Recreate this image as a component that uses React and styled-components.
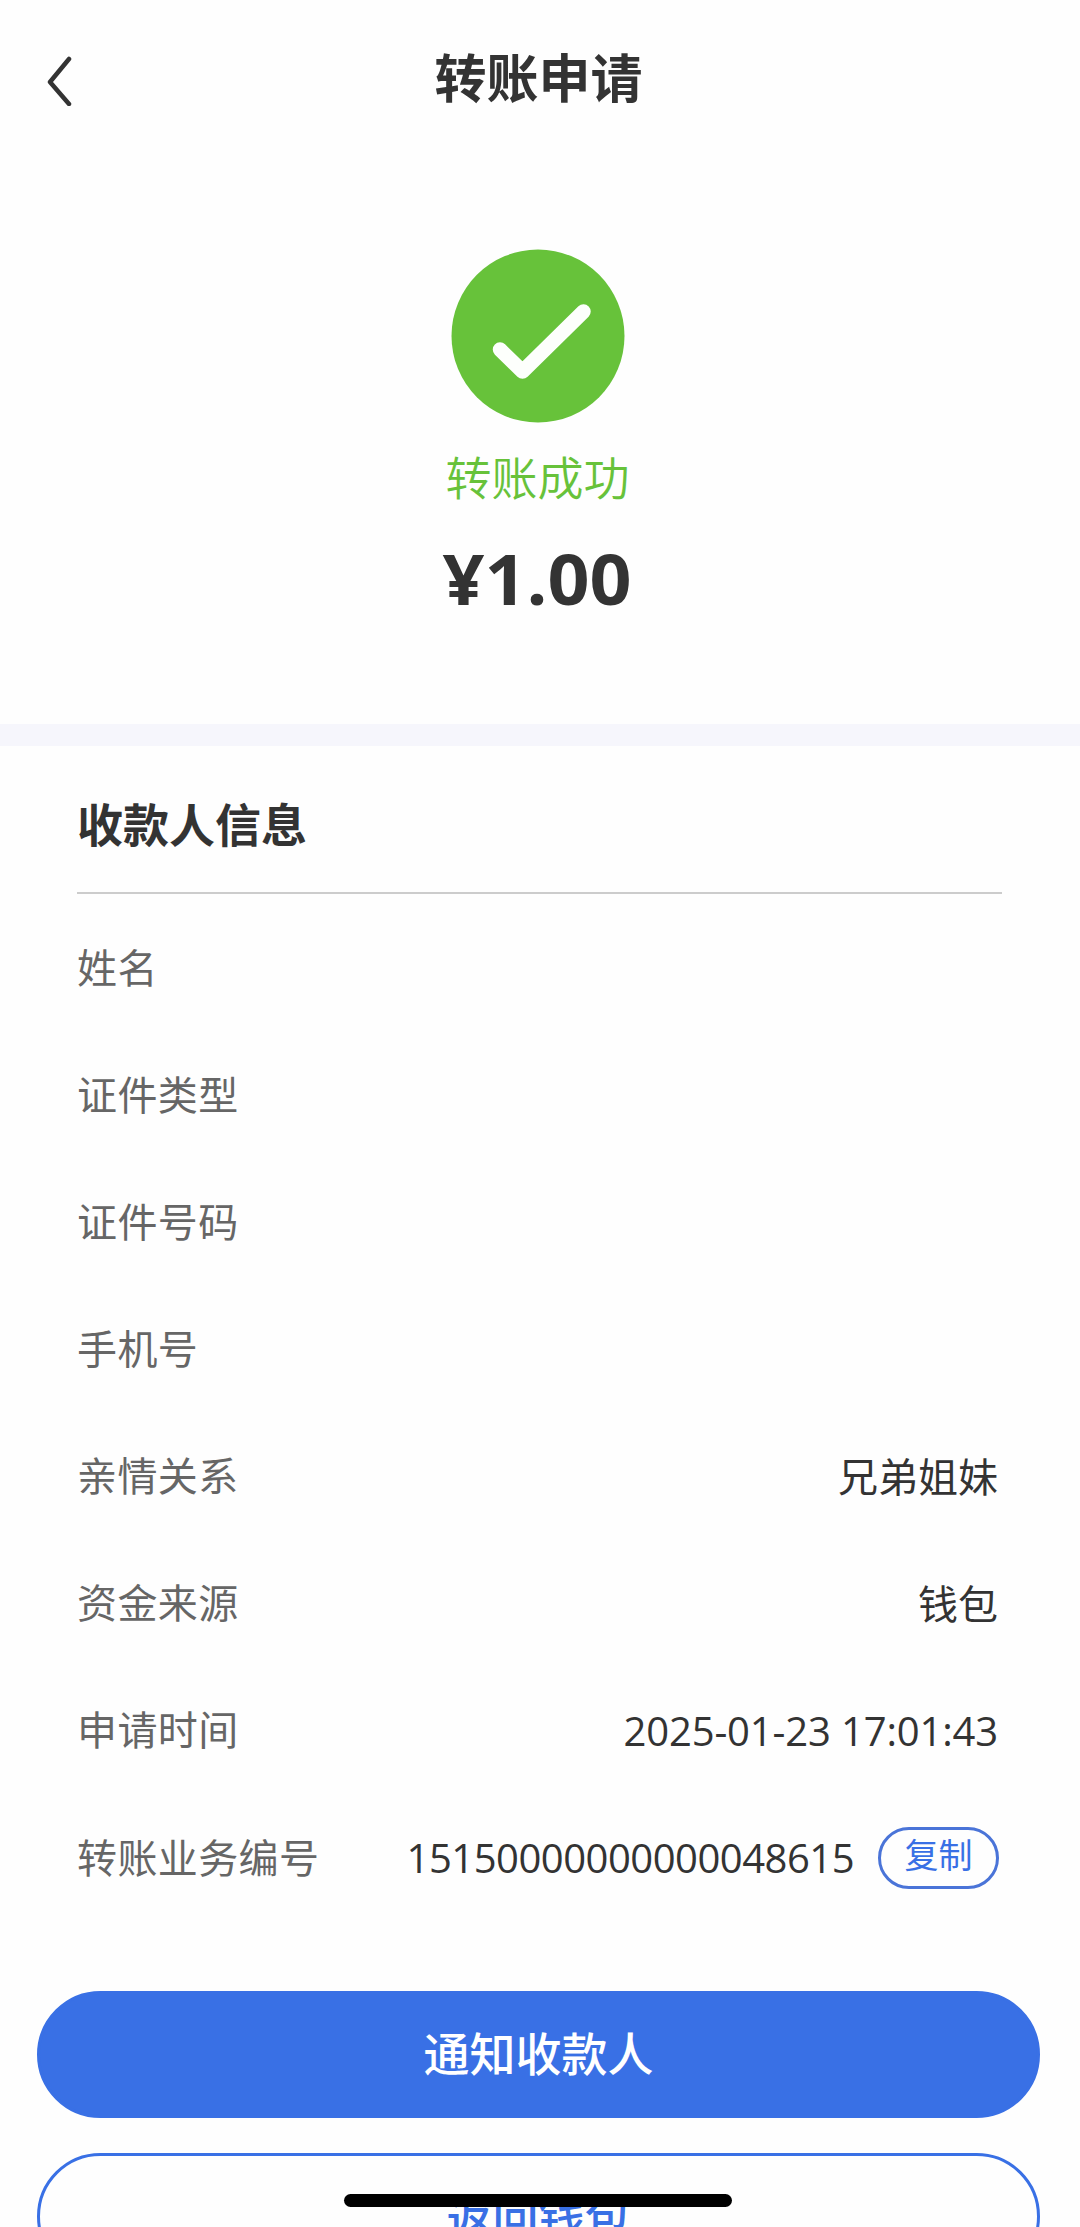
import React from 'react'
import styled, { createGlobalStyle, css } from 'styled-components';

const details = [
  { label: '姓名' },
  { label: '证件类型' },
  { label: '证件号码' },
  { label: '手机号' },
  { label: '亲情关系', value: '兄弟姐妹' },
  { label: '资金来源', value: '钱包' },
  { label: '申请时间', value: '2025-01-23 17:01:43', tracking: '-0.15px' },
  { label: '转账业务编号', value: '15150000000000048615', tracking: '-0.5px', copy: true },
];

const App = () => {
  const copyText = (text) => {
    navigator.clipboard?.writeText(text);
  };

  return (
    <Page>
      <GlobalStyle />
      <Header>
        <BackButton aria-label='返回'>
          <svg width='30' height='52' viewBox='0 0 30 52'>
            <path d='M25 5 L6 28 L25 50' fill='none' stroke='#333' strokeWidth='4.5' strokeLinecap='round' strokeLinejoin='round' />
          </svg>
        </BackButton>
        <Title>转账申请</Title>
      </Header>

      <Result>
        <svg width='174' height='174' viewBox='0 0 174 174'>
          <circle cx='87' cy='87' r='86.5' fill='#67c23a' />
          <path d='M49 100.5 L71.5 122.5 L132.5 62.5' fill='none' stroke='#fdfffc' strokeWidth='14.5' strokeLinecap='round' strokeLinejoin='round' />
        </svg>
        <Status>转账成功</Status>
        <Amount>¥1.00</Amount>
      </Result>

      <Divider />

      <Payee>
        <SectionTitle>收款人信息</SectionTitle>
        {details.map((item) => (
          <Row key={item.label}>
            <Label>{item.label}</Label>
            {item.value && <Value $tracking={item.tracking}>{item.value}</Value>}
            {item.copy && <CopyButton onClick={() => copyText(item.value)}>复制</CopyButton>}
          </Row>
        ))}
      </Payee>

      <Actions>
        <ActionButton $primary>通知收款人</ActionButton>
        <ActionButton>返回钱包</ActionButton>
      </Actions>
      <HomeIndicator />
    </Page>
  );
};

const GlobalStyle = createGlobalStyle`
  * {
    box-sizing: border-box;
  }
  body {
    margin: 0;
    background: #fefefe;
    font-family: "Noto Sans CJK SC", sans-serif;
  }
  button {
    margin: 0;
    padding: 0;
    border: none;
    background: none;
    font-family: inherit;
  }
  svg {
    display: block;
  }
`;

const Page = styled.div`
  position: relative;
  width: 1080px;
  height: 2227px;
  padding-right: 3px;
  overflow: hidden;
  color: #333;
`;

const Header = styled.header`
  display: grid;
  grid-template-columns: 120px 1fr 120px;
  align-items: center;
  height: 156px;
  padding-bottom: 5px;
`;

const BackButton = styled.button`
  padding: 8px 0 0 44px;
`;

const Title = styled.h1`
  margin: 0;
  font-size: 52px;
  font-weight: 700;
  line-height: 76px;
  text-align: center;
`;

const Result = styled.section`
  display: flex;
  flex-direction: column;
  align-items: center;
  height: 568px;
  padding: 93px 2px 0 0;
`;

const Status = styled.div`
  margin-top: 19px;
  color: #67c23a;
  font-size: 46px;
  font-weight: 350;
  line-height: 66px;
`;

const Amount = styled.div`
  margin-top: 20px;
  font-family: "Open Sans", "Noto Sans CJK SC", sans-serif;
  font-size: 70px;
  font-weight: 700;
  line-height: 100px;
  transform: scaleX(1.05);
`;

const Divider = styled.div`
  width: 1080px;
  height: 22px;
  background: #f6f6fc;
`;

const Payee = styled.section`
  padding: 0 75px 0 77px;
`;

const SectionTitle = styled.h2`
  height: 148px;
  margin: 0 0 9px;
  border-bottom: 2px solid #ccc;
  font-size: 46px;
  font-weight: 700;
  line-height: 152px;
`;

const Row = styled.div`
  display: flex;
  align-items: center;
  height: 127.15px;
  font-size: 40px;
  line-height: 60px;
`;

const Label = styled.span`
  flex: 1;
  padding-bottom: 2px;
  color: #666;
  letter-spacing: 0.4px;
`;

const Value = styled.span`
  margin-right: 4px;
  padding-bottom: 1px;
  ${({ $tracking }) => $tracking && css`
    padding: 3px 0 0;
    font-family: "Open Sans", "Noto Sans CJK SC", sans-serif;
    letter-spacing: ${$tracking};
  `}
`;

const CopyButton = styled.button`
  width: 121px;
  height: 62px;
  margin: 3px 3px 0 20px;
  padding-bottom: 8px;
  border: 3px solid #4a74d8;
  border-radius: 31px;
  color: #3970e5;
  font-size: 34px;
  line-height: 48px;
`;

const Actions = styled.section`
  display: flex;
  flex-direction: column;
  gap: 35px;
  padding: 71px 37px 0;
`;

const ActionButton = styled.button`
  flex: none;
  height: 127px;
  padding-bottom: ${({ $primary }) => ($primary ? '7px' : '3px')};
  border: 3px solid #3970e5;
  border-radius: 64px;
  background: ${({ $primary }) => ($primary ? '#3970e5' : 'transparent')};
  color: ${({ $primary }) => ($primary ? '#fff' : '#3970e5')};
  font-size: 46px;
  font-weight: 500;
  line-height: 66px;
`;

const HomeIndicator = styled.div`
  position: absolute;
  left: 344px;
  bottom: 20px;
  width: 388px;
  height: 13px;
  border-radius: 7px;
  background: #000;
`;

export default App
